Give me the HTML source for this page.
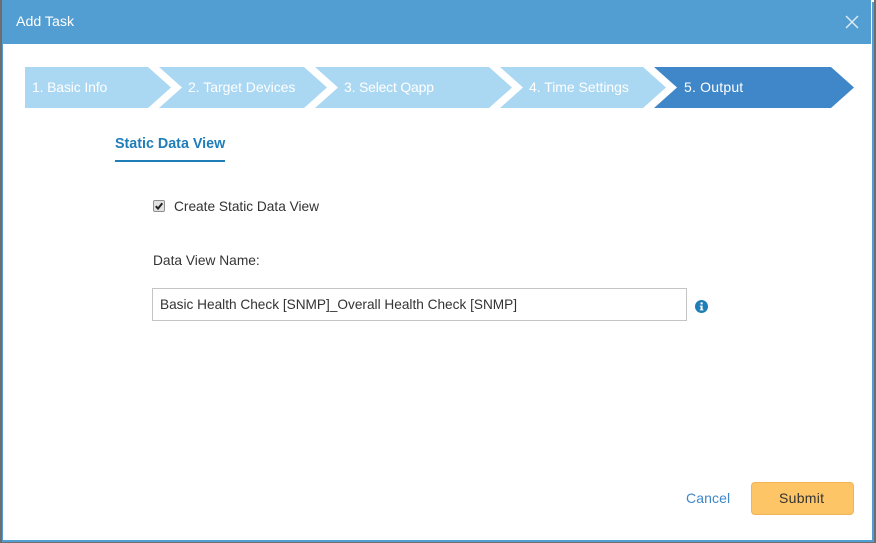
<!DOCTYPE html>
<html><head><meta charset="utf-8">
<style>
html,body{margin:0;padding:0}
body{width:876px;height:543px;overflow:hidden;background:#fff;position:relative;font-family:"Liberation Sans",sans-serif;}
.t{position:absolute;white-space:nowrap;line-height:20px}
</style></head>
<body>
<div style="position:absolute;left:0;top:0;width:2px;height:543px;background:#6e6e6e"></div>
<div style="position:absolute;left:874px;top:0;width:2px;height:543px;background:#6e6e6e"></div>
<div style="position:absolute;left:0;top:542px;width:876px;height:1px;background:#6e6e6e"></div>
<div style="position:absolute;left:2px;top:0;width:869px;height:44px;background:#529dd2"></div>
<div style="position:absolute;left:2px;top:44px;width:1px;height:498px;background:#529dd2"></div>
<div style="position:absolute;left:872px;top:2px;width:2px;height:540px;background:#529dd2"></div>
<div style="position:absolute;left:2px;top:540px;width:872px;height:2px;background:#529dd2"></div>

<div class="t" style="left:16px;top:12px;font-size:14.2px;color:#fff">Add Task</div>
<svg style="position:absolute;left:845px;top:15px" width="14" height="14" viewBox="0 0 14 14"><path d="M1 1L13 13M13 1L1 13" stroke="#dbeaf5" stroke-width="1.5" fill="none"/></svg>

<svg style="position:absolute;left:0;top:0" width="876" height="120">
<polygon points="25,67 148,67 171,87.5 148,108 25,108" fill="#aad7f2"/>
<polygon points="159,67 304,67 327,87.5 304,108 159,108 182,87.5" fill="#aad7f2"/>
<polygon points="315,67 489,67 512,87.5 489,108 315,108 338,87.5" fill="#aad7f2"/>
<polygon points="500,67 643,67 666,87.5 643,108 500,108 523,87.5" fill="#aad7f2"/>
<polygon points="654,67 831,67 854,87.5 831,108 654,108 677,87.5" fill="#3f87c8"/>
</svg>
<div class="t" style="left:32px;top:77px;font-size:14px;color:#fff;letter-spacing:-.15px">1. Basic Info</div>
<div class="t" style="left:188px;top:77px;font-size:14px;color:#fff;letter-spacing:-.03px">2. Target Devices</div>
<div class="t" style="left:344px;top:77px;font-size:14px;color:#fff;letter-spacing:-.2px">3. Select Qapp</div>
<div class="t" style="left:529px;top:77px;font-size:14px;color:#fff;letter-spacing:-.03px">4. Time Settings</div>
<div class="t" style="left:684px;top:77px;font-size:14px;color:#fff;letter-spacing:.2px">5. Output</div>

<div class="t" style="left:115px;top:134px;font-size:14.3px;font-weight:bold;color:#1f7db8">Static Data View</div>
<div style="position:absolute;left:115px;top:160px;width:110px;height:2px;background:#1f7db8"></div>

<div style="position:absolute;left:153px;top:200px;width:10px;height:10px;border:1px solid #8f8f8f;border-radius:2px;background:#e2e2e2"></div>
<svg style="position:absolute;left:153px;top:200px" width="12" height="12" viewBox="0 0 12 12"><path d="M2.8 6.2L5 8.6L9.3 3.2" stroke="#222" stroke-width="2" fill="none"/></svg>
<div class="t" style="left:174px;top:197px;font-size:13.7px;color:#333">Create Static Data View</div>
<div class="t" style="left:153px;top:251px;font-size:13.75px;color:#333">Data View Name:</div>
<div style="position:absolute;left:152px;top:288px;width:533px;height:31px;border:1px solid #c4c4c4;background:#fff"></div>
<div class="t" style="left:160px;top:295px;font-size:13.65px;color:#333">Basic Health Check [SNMP]_Overall Health Check [SNMP]</div>
<svg style="position:absolute;left:695px;top:300px" width="13" height="13" viewBox="0 0 13 13"><circle cx="6.5" cy="6.5" r="6.5" fill="#1f7db8"/><rect x="5.5" y="2.4" width="2.2" height="2" fill="#fff"/><path d="M4.8 5.6H7.6V9.4H8.4V10.4H4.8V9.4H5.6V6.6H4.8Z" fill="#fff"/></svg>

<div class="t" style="left:686px;top:488px;font-size:14px;color:#3f87c8;letter-spacing:.1px">Cancel</div>
<div style="position:absolute;left:751px;top:482px;width:101px;height:31px;border:1px solid #f0b454;border-radius:4px;background:#fec566"></div>
<div class="t" style="left:779px;top:488px;font-size:14px;color:#333;letter-spacing:.3px">Submit</div>
</body></html>
